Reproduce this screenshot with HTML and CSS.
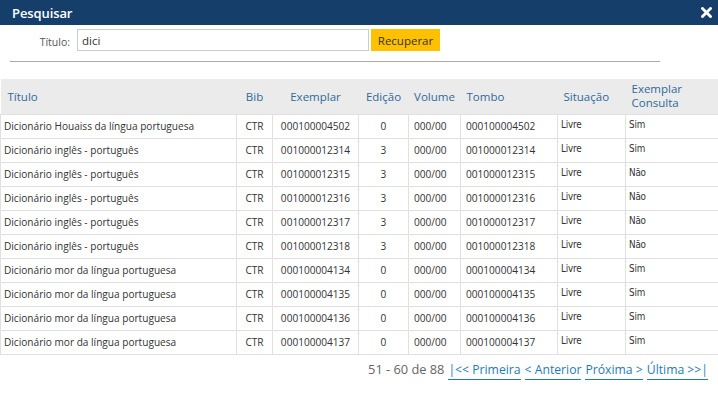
FILE: index.html
```html
<!DOCTYPE html>
<html lang="pt">
<head>
<meta charset="utf-8">
<title>Pesquisar</title>
<link rel="stylesheet" href="styles.css">
</head>
<body>
<div class="dialog">
  <div class="titlebar">
    <span class="title">Pesquisar</span>
    <span class="close" aria-label="Fechar">
      <svg width="11" height="11" viewBox="0 0 11 11"><path d="M1.5 1.5 L9.5 9.5 M9.5 1.5 L1.5 9.5" stroke="#fff" stroke-width="2.8" stroke-linecap="square"/></svg>
    </span>
  </div>
  <div class="search">
    <label class="label" for="t">Título:</label>
    <input id="t" class="input" type="text" value="dici">
    <button class="btn">Recuperar</button>
  </div>
  <div class="rule"></div>
  <table class="grid">
    <thead>
      <tr>
        <th class="c-tit">Título</th>
        <th class="c-bib center">Bib</th>
        <th class="c-ex center">Exemplar</th>
        <th class="c-ed center">Edição</th>
        <th class="c-vol center">Volume</th>
        <th class="c-tom">Tombo</th>
        <th class="c-sit">Situação</th>
        <th class="c-con">Exemplar<br>Consulta</th>
      </tr>
    </thead>
    <tbody>
      <tr><td>Dicionário Houaiss da língua portuguesa</td><td class="center">CTR</td><td class="center">000100004502</td><td class="center">0</td><td class="pad">000/00</td><td class="pad">000100004502</td><td class="sm">Livre</td><td class="sm">Sim</td></tr>
      <tr><td>Dicionário inglês - português</td><td class="center">CTR</td><td class="center">001000012314</td><td class="center">3</td><td class="pad">000/00</td><td class="pad">001000012314</td><td class="sm">Livre</td><td class="sm">Sim</td></tr>
      <tr><td>Dicionário inglês - português</td><td class="center">CTR</td><td class="center">001000012315</td><td class="center">3</td><td class="pad">000/00</td><td class="pad">001000012315</td><td class="sm">Livre</td><td class="sm">Não</td></tr>
      <tr><td>Dicionário inglês - português</td><td class="center">CTR</td><td class="center">001000012316</td><td class="center">3</td><td class="pad">000/00</td><td class="pad">001000012316</td><td class="sm">Livre</td><td class="sm">Não</td></tr>
      <tr><td>Dicionário inglês - português</td><td class="center">CTR</td><td class="center">001000012317</td><td class="center">3</td><td class="pad">000/00</td><td class="pad">001000012317</td><td class="sm">Livre</td><td class="sm">Não</td></tr>
      <tr><td>Dicionário inglês - português</td><td class="center">CTR</td><td class="center">001000012318</td><td class="center">3</td><td class="pad">000/00</td><td class="pad">001000012318</td><td class="sm">Livre</td><td class="sm">Não</td></tr>
      <tr><td>Dicionário mor da língua portuguesa</td><td class="center">CTR</td><td class="center">000100004134</td><td class="center">0</td><td class="pad">000/00</td><td class="pad">000100004134</td><td class="sm">Livre</td><td class="sm">Sim</td></tr>
      <tr><td>Dicionário mor da língua portuguesa</td><td class="center">CTR</td><td class="center">000100004135</td><td class="center">0</td><td class="pad">000/00</td><td class="pad">000100004135</td><td class="sm">Livre</td><td class="sm">Sim</td></tr>
      <tr><td>Dicionário mor da língua portuguesa</td><td class="center">CTR</td><td class="center">000100004136</td><td class="center">0</td><td class="pad">000/00</td><td class="pad">000100004136</td><td class="sm">Livre</td><td class="sm">Sim</td></tr>
      <tr><td>Dicionário mor da língua portuguesa</td><td class="center">CTR</td><td class="center">000100004137</td><td class="center">0</td><td class="pad">000/00</td><td class="pad">000100004137</td><td class="sm">Livre</td><td class="sm">Sim</td></tr>
    </tbody>
  </table>
  <div class="pager">
    <span class="count">51 - 60 de 88</span>
    <a class="plink" href="#">|&lt;&lt; Primeira</a>
    <a class="plink" href="#">&lt; Anterior</a>
    <a class="plink" href="#">Próxima &gt;</a>
    <a class="plink" href="#">Última &gt;&gt;|</a>
  </div>
</div>
</body>
</html>
```

FILE: styles.css
```css
html, body {
  margin: 0;
  padding: 0;
  background: #fff;
}
body {
  font-family: "Open Sans", "Noto Sans", sans-serif;
  color: #333;
  width: 718px;
  height: 393px;
  overflow: hidden;
}
.titlebar {
  height: 25px;
  background: #153f6a;
  display: flex;
  align-items: center;
  justify-content: space-between;
  padding: 0 6px 0 12px;
}
.title {
  color: #fff;
  font-weight: 600;
  font-size: 13px;
  letter-spacing: -0.1px;
}
.close {
  display: flex;
  width: 11px;
  height: 11px;
}
.search {
  display: flex;
  align-items: center;
  margin-top: 4px;
  height: 22px;
}
.label {
  width: 70px;
  text-align: right;
  font-size: 10.5px;
  color: #555;
  padding-top: 4px;
  margin-right: 7px;
}
.input {
  box-sizing: border-box;
  width: 292px;
  height: 22px;
  border: 1px solid #ccc;
  margin: 0;
  padding: 0 4px;
  font-family: "Open Sans", sans-serif;
  font-size: 11.5px;
  color: #333;
  outline: none;
}
.btn {
  box-sizing: border-box;
  margin: 0 0 0 2px;
  height: 22px;
  width: 69px;
  border: none;
  background: #ffc000;
  color: #333;
  font-family: "Open Sans", sans-serif;
  font-size: 11.5px;
  padding: 0;
}
.rule {
  margin: 10px 0 0 10px;
  width: 650px;
  height: 1px;
  background: #aaa;
}
.grid {
  margin-top: 17px;
  width: 718px;
  border-collapse: collapse;
  table-layout: fixed;
}
.grid th {
  background: #ebebeb;
  color: #2f6a9a;
  font-weight: 400;
  font-size: 11.5px;
  line-height: 14px;
  height: 35px;
  padding: 2px 0 0 6px;
  text-align: left;
  box-sizing: border-box;
}
.grid th.center { text-align: center; padding: 2px 0 0 0; }
.grid th.c-tit { padding-left: 7px; }
.grid th.c-con { padding-top: 0; vertical-align: middle; }
.c-tit { width: 236px; }
.c-bib { width: 36px; }
.c-ex { width: 86px; }
.c-ed { width: 50px; }
.c-vol { width: 52px; }
.c-tom { width: 97px; }
.c-sit { width: 68px; }
.c-con { width: 93px; }
.grid td {
  border: 1px solid #e0e0e0;
  height: 24px;
  padding: 0 0 0 3px;
  font-size: 10.1px;
  white-space: nowrap;
  overflow: hidden;
  box-sizing: border-box;
}
.grid td.center { text-align: center; padding: 0; }
.grid td.pad { padding-left: 5px; }
.grid td.sm { font-size: 9.8px; font-family: "DejaVu Sans Condensed", "Open Sans", sans-serif; letter-spacing: -0.2px; padding-bottom: 3px; }
.grid tr td:last-child { border-right: none; }
.pager {
  display: flex;
  justify-content: flex-end;
  align-items: baseline;
  gap: 4px;
  padding: 5px 10px 0 0;
  font-size: 12.8px;
}
.count { color: #666; }
.plink {
  color: #1f7bb6;
  font-size: 12.2px;
  text-decoration: none;
  border-bottom: 1px solid #1f7bb6;
  padding-bottom: 1px;
}
```
